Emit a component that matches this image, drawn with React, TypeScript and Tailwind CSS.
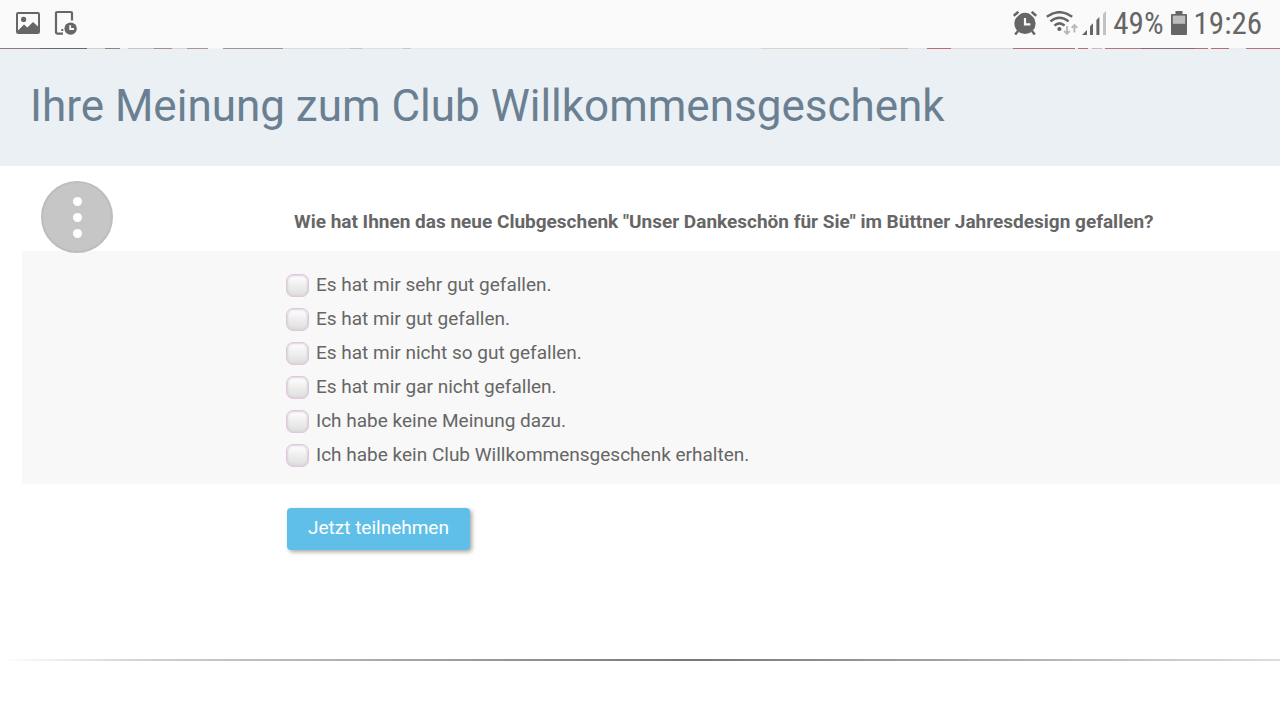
const answers = [
  'Es hat mir sehr gut gefallen.',
  'Es hat mir gut gefallen.',
  'Es hat mir nicht so gut gefallen.',
  'Es hat mir gar nicht gefallen.',
  'Ich habe keine Meinung dazu.',
  'Ich habe kein Club Willkommensgeschenk erhalten.',
];

function PictureIcon() {
  return (
    <svg width="24" height="22" viewBox="0 0 24 22" aria-hidden="true">
      <rect x="1" y="1" width="22" height="20" rx="1.2" fill="none" stroke="#666" strokeWidth="2" />
      <circle cx="7.6" cy="7.4" r="2.6" fill="#666" />
      <path d="M2 18.4L8 12.6l3.4 2.8L17 10l5 4.6V21H2z" fill="#666" />
    </svg>
  );
}

function DeviceClockIcon() {
  return (
    <svg width="24" height="26" viewBox="0 0 24 26" aria-hidden="true">
      <path d="M18 10.5V3.2Q18 2 16.8 2H3.2Q2 2 2 3.2V22.6Q2 23.6 3.2 23.6H9" fill="none" stroke="#666" strokeWidth="2.2" />
      <rect x="7.3" y="19" width="2" height="2" fill="#666" />
      <circle cx="16.6" cy="18.6" r="6.2" fill="#666" />
      <path d="M16.2 15.2V19H20" fill="none" stroke="#fafafa" strokeWidth="1.8" />
    </svg>
  );
}

function AlarmIcon() {
  return (
    <svg width="24" height="24" viewBox="0 0 24 24" aria-hidden="true">
      <circle cx="12" cy="12.4" r="10.6" fill="#666" />
      <path d="M0 5.8L6.6 0M24 5.8L17.4 0" stroke="#fafafa" strokeWidth="5.4" fill="none" />
      <path d="M.8 4.8L5.4 .8M23.2 4.8L18.6 .8" stroke="#666" strokeWidth="2.6" fill="none" />
      <path d="M5 20L2.2 23.6M19 20L21.8 23.6" stroke="#666" strokeWidth="2.4" fill="none" />
      <path d="M12 7V13.4H17.4" stroke="#fafafa" strokeWidth="2.2" fill="none" />
    </svg>
  );
}

function WifiIcon() {
  return (
    <svg width="32" height="24" viewBox="0 0 32 24" aria-hidden="true">
      <g fill="none" stroke="#666" strokeWidth="2.5">
        <path d="M.8 5.8Q13.5-3.4 26.2 5.8" />
        <path d="M4.4 10.4Q13.5 3 22.6 10.4" />
        <path d="M8.4 14.6Q13.5 10.2 18.6 14.6" />
      </g>
      <circle cx="13.4" cy="18" r="2.1" fill="#666" />
      <path d="M21 15V22.6M18.2 20L21 22.8L23.8 20M28.4 21.6V14M25.6 16.8L28.4 14L31.2 16.8" fill="none" stroke="#b8b8b8" strokeWidth="1.9" />
    </svg>
  );
}

function SignalIcon() {
  return (
    <svg width="24" height="24" viewBox="0 0 24 24" aria-hidden="true">
      <path d="M0 24L5 19V24z" fill="#666" />
      <path d="M8 15.2L11 12.2V24H8z" fill="#666" />
      <path d="M14.4 9L17.4 6V24H14.4z" fill="#666" />
      <path d="M21 3L24 0V24H21z" fill="#c2c2c2" />
    </svg>
  );
}

function BatteryIcon() {
  return (
    <svg width="16" height="24" viewBox="0 0 16 24" aria-hidden="true">
      <path d="M4.5 0H11.5V3H15Q16 3 16 4V23Q16 24 15 24H1Q0 24 0 23V4Q0 3 1 3H4.5z" fill="#666" />
      <rect x="1.8" y="4.6" width="12.4" height="8.2" fill="#bdbdbd" />
    </svg>
  );
}

function StatusBar() {
  return (
    <header className="flex h-12 items-center justify-between bg-[#fafafa] pr-[18px] pb-[2px] pl-4 font-['Roboto_Condensed',Roboto,sans-serif] text-[31px] leading-none text-[#666]">
      <div className="flex items-center gap-[14px]">
        <PictureIcon />
        <DeviceClockIcon />
      </div>
      <div className="flex items-center gap-[7px]">
        <div className="flex items-center gap-[9px]">
          <AlarmIcon />
          <div className="flex items-center gap-1">
            <WifiIcon />
            <SignalIcon />
          </div>
        </div>
        <span>49%</span>
        <BatteryIcon />
        <span>19:26</span>
      </div>
    </header>
  );
}

const photoEdge: [number, number, string][] = [
  [0, 40, '#91777e'],
  [40, 47, '#646671'],
  [87, 18, '#d3cec6'],
  [105, 15, '#8e8482'],
  [120, 8, '#efebe8'],
  [128, 26, '#c6c2c2'],
  [154, 18, '#a68f89'],
  [172, 15, '#dcd6d2'],
  [187, 21, '#a99690'],
  [208, 15, '#f5f3f0'],
  [223, 60, '#9f9691'],
  [283, 67, '#d8dce0'],
  [350, 12, '#c2c3c9'],
  [362, 41, '#dce0e5'],
  [403, 8, '#c5c8ca'],
  [411, 350, '#e5e9e9'],
  [761, 119, '#d9d3cc'],
  [880, 28, '#c9bdb3'],
  [908, 19, '#e3e6e6'],
  [927, 24, '#bd6c75'],
  [951, 62, '#dfd5d1'],
  [1013, 62, '#b36d75'],
  [1078, 10, '#bd6b74'],
  [1092, 10, '#dbb4b6'],
  [1105, 36, '#b9757e'],
  [1141, 54, '#8b6870'],
  [1195, 13, '#bd6b74'],
  [1211, 18, '#bd6b74'],
  [1246, 34, '#b5727c'],
];

function PhotoEdge() {
  return (
    <svg className="block h-px w-full bg-[#e8edef]" viewBox="0 0 1280 1" preserveAspectRatio="none" aria-hidden="true">
      {photoEdge.map(([x, width, color]) => (
        <rect key={x} x={x} width={width} height="1" fill={color} />
      ))}
    </svg>
  );
}

export default function App() {
  return (
    <div className="min-h-screen bg-white font-[Roboto,sans-serif] text-[19px] text-[#666]">
      <StatusBar />
      <PhotoEdge />
      <div className="bg-[#eaf0f3] px-[30px] pt-[31px] pb-[34px]">
        <h1 className="text-[44px] leading-[52px] text-[#6b7f92]">Ihre Meinung zum Club Willkommensgeschenk</h1>
      </div>
      <main>
        <form onSubmit={(event) => event.preventDefault()}>
          <fieldset aria-labelledby="question">
            <div className="flex h-[85px] items-start pt-[15px] pl-[41px]">
              <button
                type="button"
                aria-label="Menü"
                className="flex size-[72px] shrink-0 flex-col items-center justify-center gap-[7px] rounded-full border-2 border-[#bdbdbd] bg-[#c6c6c6]"
              >
                <span className="size-[9px] rounded-full bg-white" />
                <span className="size-[9px] rounded-full bg-white" />
                <span className="size-[9px] rounded-full bg-white" />
              </button>
              <p id="question" className="ml-[181px] pt-[29px] leading-6 font-bold">
                Wie hat Ihnen das neue Clubgeschenk "Unser Dankeschön für Sie" im Büttner Jahresdesign gefallen?
              </p>
            </div>
            <div className="ml-[22px] bg-[#f8f8f8] pt-[17px] pb-[12px] pl-[264px]">
              {answers.map((answer, index) => (
                <div key={answer} className="flex h-[34px] items-center gap-[7px]">
                  <input
                    id={`answer-${index}`}
                    type="checkbox"
                    className="size-[23px] appearance-none rounded-[7px] border border-[#e3c4e1] bg-linear-to-b from-white to-[#dedede] shadow-[inset_0_0_2px_1px_#d4d4d4] checked:to-[#b9b9b9]"
                  />
                  <label htmlFor={`answer-${index}`} className="leading-[34px]">{answer}</label>
                </div>
              ))}
            </div>
          </fieldset>
          <button
            type="submit"
            className="mt-6 ml-[287px] h-[42px] rounded-[4px] bg-[#5fbfe9] px-[21px] pb-[2px] text-white shadow-[2px_2px_4px_rgba(0,0,0,0.35)]"
          >
            Jetzt teilnehmen
          </button>
        </form>
        <hr className="mt-[109px] h-[2px] border-0 bg-[linear-gradient(90deg,transparent_0%,#cfcfcf_12%,#777_54%,#dedede_100%)]" />
      </main>
    </div>
  );
}
